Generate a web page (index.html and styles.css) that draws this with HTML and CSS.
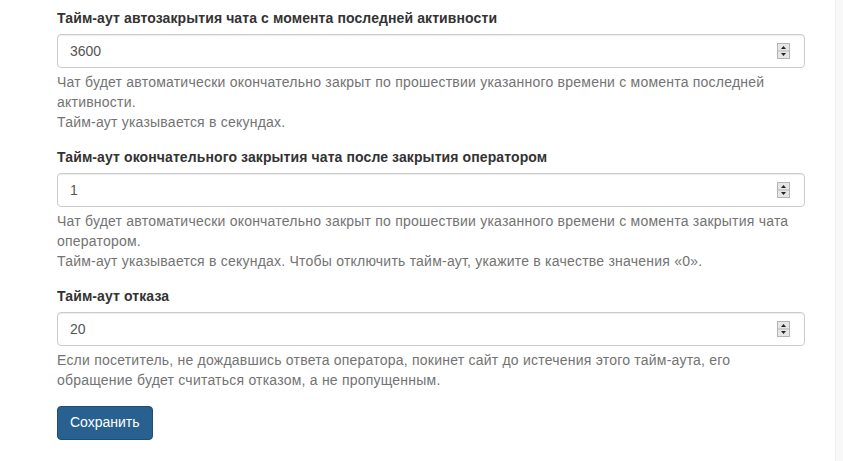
FILE: index.html
```html
<!DOCTYPE html>
<html lang="ru">
<head>
    <meta charset="UTF-8">
    <meta name="viewport" content="width=device-width, initial-scale=1.0">
    <title>Настройки чата</title>
    <link rel="stylesheet" href="styles.css">
</head>
<body>
    <div class="page">
        <div class="main">
            <form class="settings-form">
                <div class="form-group">
                    <label for="autoclose">Тайм-аут автозакрытия чата с момента последней активности</label>
                    <div class="number-field">
                        <input type="number" id="autoclose" class="form-control" value="3600">
                        <span class="spinner">
                            <svg width="13" height="16" viewBox="0 0 13 16">
                                <rect x="0.5" y="0.5" width="12" height="15" fill="#e6e6e6" stroke="#b5b5b5"/>
                                <line x1="1" y1="8" x2="12" y2="8" stroke="#b5b5b5"/>
                                <polygon points="4,6 9,6 6.5,3" fill="#222"/>
                                <polygon points="4,10 9,10 6.5,13" fill="#222"/>
                            </svg>
                        </span>
                    </div>
                    <p class="help-block">Чат будет автоматически окончательно закрыт по прошествии указанного времени с момента последней активности.<br>Тайм-аут указывается в секундах.</p>
                </div>

                <div class="form-group">
                    <label for="closed">Тайм-аут окончательного закрытия чата после закрытия оператором</label>
                    <div class="number-field">
                        <input type="number" id="closed" class="form-control" value="1">
                        <span class="spinner">
                            <svg width="13" height="16" viewBox="0 0 13 16">
                                <rect x="0.5" y="0.5" width="12" height="15" fill="#e6e6e6" stroke="#b5b5b5"/>
                                <line x1="1" y1="8" x2="12" y2="8" stroke="#b5b5b5"/>
                                <polygon points="4,6 9,6 6.5,3" fill="#222"/>
                                <polygon points="4,10 9,10 6.5,13" fill="#222"/>
                            </svg>
                        </span>
                    </div>
                    <p class="help-block">Чат будет автоматически окончательно закрыт по прошествии указанного времени с момента закрытия чата оператором.<br>Тайм-аут указывается в секундах. Чтобы отключить тайм-аут, укажите в качестве значения «0».</p>
                </div>

                <div class="form-group">
                    <label for="refusal">Тайм-аут отказа</label>
                    <div class="number-field">
                        <input type="number" id="refusal" class="form-control" value="20">
                        <span class="spinner">
                            <svg width="13" height="16" viewBox="0 0 13 16">
                                <rect x="0.5" y="0.5" width="12" height="15" fill="#e6e6e6" stroke="#b5b5b5"/>
                                <line x1="1" y1="8" x2="12" y2="8" stroke="#b5b5b5"/>
                                <polygon points="4,6 9,6 6.5,3" fill="#222"/>
                                <polygon points="4,10 9,10 6.5,13" fill="#222"/>
                            </svg>
                        </span>
                    </div>
                    <p class="help-block">Если посетитель, не дождавшись ответа оператора, покинет сайт до истечения этого тайм-аута, его обращение будет считаться отказом, а не пропущенным.</p>
                </div>

                <button type="submit" class="btn-primary">Сохранить</button>
            </form>
        </div>
        <div class="sidebar"></div>
    </div>
</body>
</html>
```

FILE: styles.css
```css
* {
    box-sizing: border-box;
}

body {
    margin: 0;
    font-family: "Liberation Sans", Arial, Helvetica, sans-serif;
    font-size: 14px;
    line-height: 1.42857;
    color: #333;
    background-color: #fff;
}

.page {
    display: flex;
    min-height: 100vh;
}

.main {
    width: 835px;
    padding: 9px 30px 0 57px;
}

.sidebar {
    flex: 1;
    background-color: #f8f8f8;
    border-left: 1px solid #f0f0f0;
}

.form-group {
    margin-bottom: 15px;
}

.form-group label {
    display: inline-block;
    margin-bottom: 5px;
    font-weight: bold;
    letter-spacing: 0.1px;
}

.number-field {
    position: relative;
}

.form-control {
    display: block;
    width: 100%;
    height: 34px;
    padding: 6px 12px;
    font-family: inherit;
    font-size: 14px;
    line-height: 1.42857;
    color: #555;
    background-color: #fff;
    border: 1px solid #ccc;
    border-radius: 4px;
    box-shadow: inset 0 1px 1px rgba(0, 0, 0, 0.075);
    -moz-appearance: textfield;
}

.form-control::-webkit-inner-spin-button,
.form-control::-webkit-outer-spin-button {
    -webkit-appearance: none;
    margin: 0;
}

.spinner {
    position: absolute;
    top: 9px;
    right: 15px;
    width: 13px;
    height: 16px;
    pointer-events: none;
}

.spinner svg {
    display: block;
}

.help-block {
    display: block;
    margin: 5px 0 10px;
    color: #737373;
    letter-spacing: 0.22px;
}

.btn-primary {
    display: inline-block;
    padding: 6px 12px;
    font-family: inherit;
    font-size: 14px;
    line-height: 1.42857;
    color: #fff;
    background-color: #286090;
    border: 1px solid #204d74;
    border-radius: 4px;
    cursor: pointer;
}
```
